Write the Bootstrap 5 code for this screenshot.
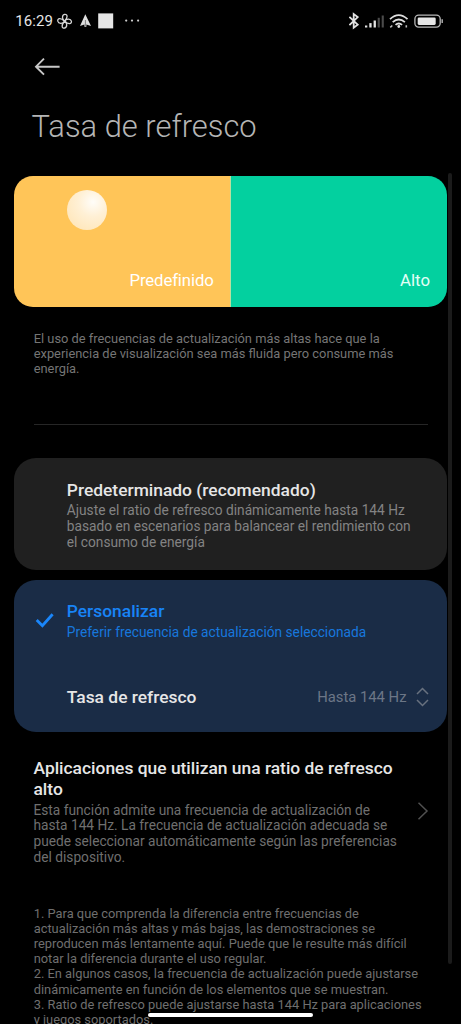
<!DOCTYPE html>
<html lang="es" data-bs-theme="dark">
<head>
<meta charset="utf-8">
<meta name="viewport" content="width=device-width, initial-scale=1">
<title>Tasa de refresco</title>
<link rel="stylesheet" href="https://cdn.jsdelivr.net/npm/bootstrap@5.3.0/dist/css/bootstrap.min.css">
<style>
body{background:#000;font-family:Roboto,sans-serif;height:1024px;overflow:hidden;color:#e6e6e6}
.screen{height:1024px;padding:0 14.5px 0 14.3px}
.status-bar{height:42px;padding-left:1px;font-size:15px;line-height:18px}
.clock{width:37.5px;letter-spacing:.1px}
.signals{margin-right:-.4px}
.back-row{height:67px;padding:15px 0 0 20px}
.page-title{font-size:30.9px;font-weight:300;line-height:36px;margin:0 0 31px 17.3px;color:#b5b5b5}
.demo{height:130.5px;border-radius:19px;font-size:16.8px;line-height:20px;color:#fff}
.demo-pane{padding:0 16.5px 16.5px}
.demo-default{background:#ffc558;flex:0 0 215.9px;letter-spacing:-.13px}
.demo-high{background:#03d09f;border-left:1px solid #b9dfa0;color:#e2fff6}
.ball{left:52.3px;top:13.6px;width:40.4px;height:40.4px;background:radial-gradient(circle at 65% 30%,#fffdf9 0,#fff0d5 38%,#ffe3b0 100%)}
.fine{font-size:12.87px;line-height:15.2px;color:#757575;white-space:nowrap}
.intro{margin:24.2px 0 0 19.4px}
.rule{height:1px;background:#262626;margin:47.9px 18.5px 33px 19.4px}
.option{border-radius:22px;padding-left:52.5px}
.option-auto{background:#202020;height:112px;padding-top:21.4px;margin-bottom:9.8px}
.option-auto .desc{margin-top:3.1px}
.option-custom{background:#1a2c46;height:152px;padding-top:21.2px}
.name{font-size:17.42px;line-height:20.3px;font-weight:500;white-space:nowrap}
.desc{font-size:13.72px;line-height:15.8px;color:#838383;white-space:nowrap;margin-top:3.5px}
.picked .name{color:#1884f7}
.picked .desc{color:#1777dd;margin-top:3.3px}
.tick{left:20px;top:31.6px}
.rate-row{margin-top:45.5px;padding-right:18px}
.value{font-size:14.8px;color:#6c7686;margin-right:9px}
.apps{margin:26.5px 18px 0 19.2px}
.apps .desc{color:#6f6f6f;margin-top:3.5px}
.apps svg{margin-bottom:2px}
.notes{margin:39.8px 0 0 19.4px;color:#6f6f6f}
.scroll-thumb{left:448px;top:173px;width:4px;height:791px;background:#1b1b1b}
.home-pill{left:148px;top:1013px;width:164.5px;height:4.4px;background:#fff}
</style>
</head>
<body>
<main class="screen position-relative overflow-hidden">
  <header class="status-bar d-flex align-items-center justify-content-between">
    <div class="d-flex align-items-center">
      <span class="clock">16:29</span>
      <svg width="90" height="18" viewBox="0 0 90 18" class="ms-1">
        <g fill="none" stroke="#d6d6d6" stroke-width="1.3"><path id="blade" d="M7.6 9.2C5.2 8 4.4 3.2 7.6 2.4C10.6 1.9 11.2 5.4 7.6 9.2"/><use href="#blade" transform="rotate(90 7.6 9.2)"/><use href="#blade" transform="rotate(180 7.6 9.2)"/><use href="#blade" transform="rotate(270 7.6 9.2)"/></g>
        <path d="M28.3 2.2L34 14L29.4 12.6V14.8H27.4V12.6L23 14Z" fill="#dedede"/><path d="M28.4 8V14" stroke="#555" stroke-width=".7"/>
        <path d="M41.2 1.4h15v15h-15z" fill="#e6e6e6"/>
        <g fill="#ccc"><circle cx="69.2" cy="8.6" r="1.1"/><circle cx="75" cy="8.6" r="1.1"/><circle cx="81.1" cy="8.6" r="1.1"/></g>
      </svg>
    </div>
    <svg class="signals" width="98" height="20" viewBox="349.3 10.5 98 20">
      <path d="M349.7 16.4L358 24.2L354 27.2V13.6L358 16.6L349.7 24.6" fill="none" stroke="#e2e2e2" stroke-width="1.8"/>
      <g fill="#e3e3e3"><rect x="365.3" y="25" width="2.3" height="2"/><rect x="369.6" y="22.6" width="2.3" height="4.4"/><rect x="373.9" y="20" width="2.3" height="7"/></g>
      <g fill="#4b4b4b"><rect x="378" y="17.3" width="2.1" height="9.7"/><rect x="382" y="15" width="2.1" height="12"/></g>
      <g fill="none" stroke="#dedede" stroke-width="1.8"><path d="M390.3 18.6Q399 10.6 407.8 18.6"/><path d="M393 21.7Q399 16.2 405.2 21.7"/><path d="M395.8 24.4Q399 21.7 402.4 24.4"/></g>
      <circle cx="399.1" cy="26" r="1.4" fill="#e3e3e3"/><path d="M390.6 26.8l2-1.8M406.6 24.8v2.2" stroke="#bbb" stroke-width="1.6" fill="none"/>
      <rect x="415.2" y="14.7" width="25.3" height="11.9" rx="3.8" fill="none" stroke="#b8b8b8" stroke-width="1.3"/><rect x="418" y="17" width="18" height="7.4" rx="1.3" fill="#e6e6e6"/><path d="M442.5 18.8v3.8" stroke="#aaa" stroke-width="1.5"/>
    </svg>
  </header>
  <div class="back-row">
    <svg width="28" height="20" viewBox="0 0 28 20" class="d-block" fill="none" stroke="#c7c7c7" stroke-width="1.9"><path d="M25.6 9.7H2M10 1.6L2 9.7L10 17.7"/></svg>
  </div>
  <h1 class="page-title">Tasa de refresco</h1>
  <section class="demo d-flex overflow-hidden">
    <div class="demo-pane demo-default position-relative d-flex align-items-end justify-content-end"><span class="ball rounded-circle position-absolute"></span>Predefinido</div>
    <div class="demo-pane demo-high flex-fill d-flex align-items-end justify-content-end">Alto</div>
  </section>
  <p class="fine intro mb-0">El uso de frecuencias de actualización más altas hace que la<br>experiencia de visualización sea más fluida pero consume más<br>energía.</p>
  <div class="rule"></div>
  <section class="option option-auto">
    <div class="name">Predeterminado (recomendado)</div>
    <div class="desc">Ajuste el ratio de refresco dinámicamente hasta 144 Hz<br>basado en escenarios para balancear el rendimiento con<br>el consumo de energía</div>
  </section>
  <section class="option option-custom position-relative">
    <svg class="tick position-absolute" width="22" height="18" viewBox="0 0 22 18" fill="none" stroke="#1a86fa" stroke-width="2.8"><path d="M2.7 8L8.4 13.8L18.6 2.3"/></svg>
    <div class="picked"><div class="name">Personalizar</div><div class="desc">Preferir frecuencia de actualización seleccionada</div></div>
    <div class="rate-row d-flex align-items-center">
      <div class="name me-auto">Tasa de refresco</div><span class="value">Hasta 144 Hz</span>
      <svg width="13" height="20" viewBox="0 0 13 20" fill="none" stroke="#68717f" stroke-width="1.5"><path d="M1 7L6.5 1.5L12 7M1 13L6.5 18.5L12 13"/></svg>
    </div>
  </section>
  <section class="apps d-flex align-items-center justify-content-between">
    <div><div class="name">Aplicaciones que utilizan una ratio de refresco<br>alto</div>
    <div class="desc">Esta función admite una frecuencia de actualización de<br>hasta 144 Hz. La frecuencia de actualización adecuada se<br>puede seleccionar automáticamente según las preferencias<br>del dispositivo.</div></div>
    <svg width="12" height="20" viewBox="0 0 12 20" fill="none" stroke="#505050" stroke-width="1.5"><path d="M1.5 1.8L10 10L1.5 18.2"/></svg>
  </section>
  <p class="fine notes mb-0">1. Para que comprenda la diferencia entre frecuencias de<br>actualización más altas y más bajas, las demostraciones se<br>reproducen más lentamente aquí. Puede que le resulte más difícil<br>notar la diferencia durante el uso regular.<br>2. En algunos casos, la frecuencia de actualización puede ajustarse<br>dinámicamente en función de los elementos que se muestran.<br>3. Ratio de refresco puede ajustarse hasta 144 Hz para aplicaciones<br>y juegos soportados.</p>
  <div class="scroll-thumb position-absolute rounded-1"></div>
  <div class="home-pill position-absolute rounded-pill"></div>
</main>
<script src="https://cdn.jsdelivr.net/npm/bootstrap@5.3.0/dist/js/bootstrap.bundle.min.js"></script>
</body>
</html>
